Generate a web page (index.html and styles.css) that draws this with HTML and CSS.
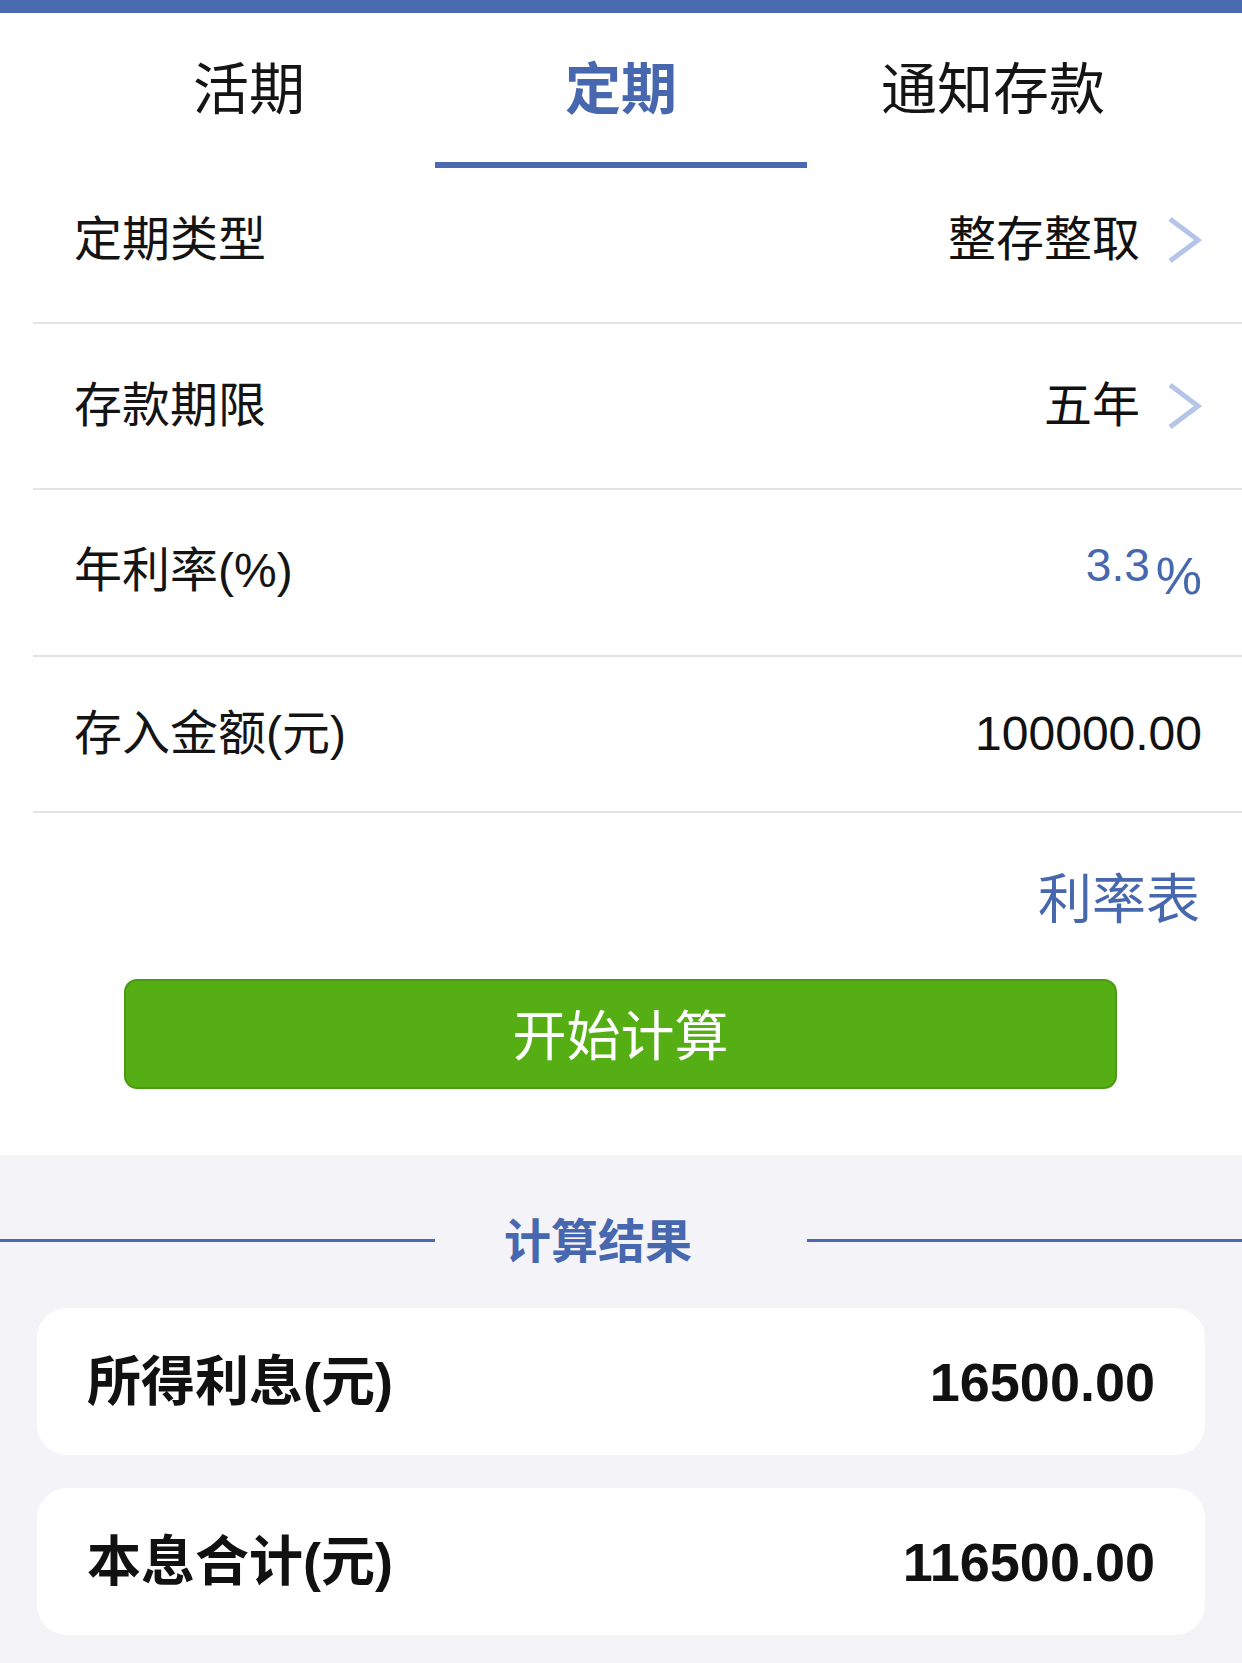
FILE: index.html
```
<!DOCTYPE html>
<html lang="zh-CN">
<head>
<meta charset="utf-8">
<title>存款计算器</title>
<link rel="stylesheet" href="styles.css">
</head>
<body>
<div class="page">
  <div class="topbar"></div>
  <nav class="tabs">
    <div class="tab"><span class="tab-text">活期</span></div>
    <div class="tab active"><span class="tab-text">定期</span></div>
    <div class="tab"><span class="tab-text">通知存款</span></div>
  </nav>

  <section class="form">
    <div class="row row-1">
      <span class="label">定期类型</span>
      <span class="value">整存整取<svg class="chevron" viewBox="0 0 36 48" width="36" height="48"><polyline points="4,3 32,24 4,45" fill="none" stroke="#b6c5e7" stroke-width="5"/></svg></span>
    </div>
    <div class="row row-2">
      <span class="label">存款期限</span>
      <span class="value">五年<svg class="chevron" viewBox="0 0 36 48" width="36" height="48"><polyline points="4,3 32,24 4,45" fill="none" stroke="#b6c5e7" stroke-width="5"/></svg></span>
    </div>
    <div class="row row-3">
      <span class="label">年利率(%)</span>
      <span class="value rate"><span class="rate-num">3.3</span><span class="pct">%</span></span>
    </div>
    <div class="row row-4">
      <span class="label">存入金额(元)</span>
      <span class="value amount">100000.00</span>
    </div>
  </section>

  <div class="rate-link">利率表</div>

  <div class="btn-wrap">
    <button class="calc-btn">开始计算</button>
  </div>

  <section class="result">
    <div class="result-head">
      <span class="head-line"></span>
      <span class="head-text">计算结果</span>
      <span class="head-line grow"></span>
    </div>
    <div class="card">
      <span class="card-label">所得利息(元)</span>
      <span class="card-value">16500.00</span>
    </div>
    <div class="card">
      <span class="card-label">本息合计(元)</span>
      <span class="card-value">116500.00</span>
    </div>
  </section>
</div>
</body>
</html>
```

FILE: styles.css
```
* {
  box-sizing: border-box;
}

html, body {
  margin: 0;
  padding: 0;
  background: #f3f3f8;
}

body {
  font-family: "Liberation Sans", "Noto Sans CJK SC", sans-serif;
  color: #111111;
}

.page {
  width: 1242px;
  min-height: 1663px;
  background: #f3f3f8;
}

.topbar {
  height: 13px;
  background: #4a6ab0;
}

.tabs {
  display: flex;
  padding: 0 63px;
  background: #ffffff;
}

.tab {
  width: 372px;
  height: 155px;
  display: flex;
  align-items: center;
  justify-content: center;
  border-bottom: 6px solid transparent;
  padding-bottom: 6px;
}

.tab-text {
  font-family: "Noto Sans CJK SC", sans-serif;
  font-size: 56px;
  line-height: 1;
  color: #151515;
}

.tab.active {
  border-bottom-color: #4a6ab0;
}

.tab.active .tab-text {
  color: #4767ae;
  font-weight: 700;
}

.form {
  background: #ffffff;
}

.row {
  display: flex;
  align-items: center;
  justify-content: space-between;
  margin-left: 33px;
  padding: 0 40px 0 41px;
  border-bottom: 2px solid #e4e4e6;
}

.row-1 { height: 156px; padding-bottom: 10px; }
.row-2 { height: 166px; }
.row-3 { height: 167px; padding-bottom: 4px; }
.row-4 { height: 156px; padding-top: 0; }

.label {
  font-size: 48px;
  line-height: 1;
  color: #141414;
}

.value {
  display: flex;
  align-items: center;
  font-size: 48px;
  line-height: 1;
  color: #111111;
}

.chevron {
  margin-left: 26px;
  display: block;
}

.rate {
  color: #4767ae;
  font-size: 46px;
  align-items: baseline;
}

.rate-num {
  transform: translateY(-8px);
}

.pct {
  font-size: 52px;
  transform: translateY(5px);
  margin-left: 6px;
}

.amount {
  font-size: 48px;
}

.rate-link {
  background: #ffffff;
  text-align: right;
  padding: 60px 42px 0 0;
  font-size: 54px;
  line-height: 54px;
  color: #4767ae;
}

.btn-wrap {
  background: #ffffff;
  padding: 52px 125px 66px 124px;
}

.calc-btn {
  display: flex;
  align-items: center;
  justify-content: center;
  width: 993px;
  height: 110px;
  margin: 0;
  padding: 0 0 2px 0;
  background: #55ae14;
  border: 2px solid #4b9a14;
  border-radius: 13px;
  color: #ffffff;
  font-family: "Noto Sans CJK SC", sans-serif;
  font-size: 54px;
  line-height: 1;
}

.result {
  background: #f3f3f8;
  padding: 55px 0 28px;
}

.result-head {
  display: flex;
  align-items: center;
  height: 60px;
  margin-bottom: 38px;
}

.head-line {
  width: 435px;
  height: 3px;
  background: #4a6ab0;
}

.head-line.grow {
  flex: 1;
  width: auto;
}

.head-text {
  width: 372px;
  text-align: center;
  font-family: "Noto Sans CJK SC", sans-serif;
  font-weight: 700;
  font-size: 47px;
  line-height: 1;
  color: #4767ae;
  padding-right: 46px;
  padding-bottom: 6px;
}

.card {
  display: flex;
  align-items: center;
  justify-content: space-between;
  margin: 0 37px 33px 37px;
  height: 147px;
  padding: 0 50px 0 50px;
  background: #ffffff;
  border-radius: 30px;
}

.card-label {
  font-size: 54px;
  font-weight: 700;
  line-height: 1;
  color: #111111;
}

.card-value {
  font-size: 54px;
  font-weight: 700;
  line-height: 1;
  color: #111111;
}
```
